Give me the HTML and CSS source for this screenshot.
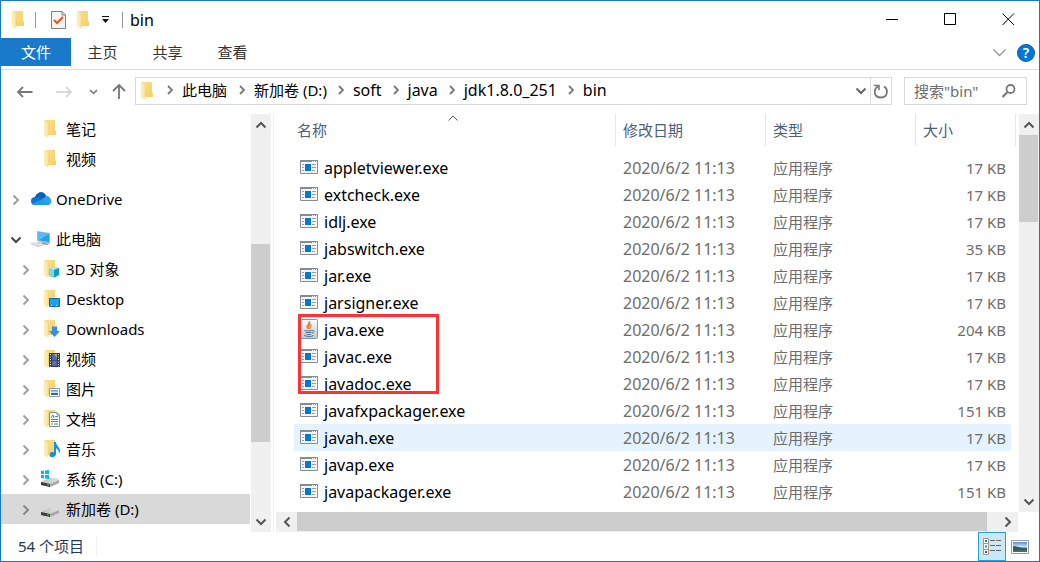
FILE: index.html
```html
<!DOCTYPE html>
<html lang="zh-CN">
<head>
<meta charset="utf-8">
<title>bin</title>
<link rel="stylesheet" href="styles.css">
</head>
<body>
<svg class="defs" aria-hidden="true">
  <defs>
    <linearGradient id="gold" x1="0" x2="1" y1="0" y2="1"><stop offset="0" stop-color="#fbdf8a"/><stop offset="1" stop-color="#f5cf6b"/></linearGradient>
    <linearGradient id="drv" x1="0" x2="1"><stop offset="0" stop-color="#bdbdbd"/><stop offset="1" stop-color="#e2e2e2"/></linearGradient>
    <linearGradient id="sky" x1="0" x2="0" y1="0" y2="1"><stop offset="0" stop-color="#4a8fdc"/><stop offset=".5" stop-color="#d4ecfa"/><stop offset=".6" stop-color="#3c6f62"/><stop offset="1" stop-color="#2f69a8"/></linearGradient>
    <linearGradient id="tile" x1="0" x2="0" y1="0" y2="1"><stop offset="0" stop-color="#fafcfd"/><stop offset="1" stop-color="#bccbd6"/></linearGradient>
    <g id="fold"><path d="M1 0H11V10L12 11V15H1Z" fill="url(#gold)"/><path d="M0 0L4 3V17.500L0 15.500Z" fill="#feebb0"/><path d="M4 3V17" stroke="#f3cf74" stroke-width=".6"/></g>
  </defs>
  <symbol id="folder" viewBox="0 0 18 18"><use href="#fold"/></symbol>
  <symbol id="cube" viewBox="0 0 18 18"><use href="#fold"/><path d="M5 9L10 7L15 8V15L10 17.500L5 16Z" fill="#3fc3d8"/><path d="M5 9L10 7L15 8L10 10Z" fill="#b4edf4"/><path d="M10 10L15 8V15L10 17.500Z" fill="#0f9cb6"/><path d="M5 9L10 10V17.500L5 16Z" fill="#74dce8"/></symbol>
  <symbol id="desktop" viewBox="0 0 18 18"><use href="#fold"/><path d="M5.500 8.500H15.500V16.500H5.500Z" fill="#1ba1f4" stroke="#0969b0"/><path d="M7 15.500H14" stroke="#d5eefe" stroke-dasharray="1 4"/></symbol>
  <symbol id="download" viewBox="0 0 18 18"><use href="#fold"/><path d="M8 6.500H13V11H16L10.500 17L5 11H8Z" fill="#3690e0"/></symbol>
  <symbol id="video" viewBox="0 0 18 18"><use href="#fold"/><path d="M5 3H16V17H5Z" fill="#3d3d3d"/><path d="M6.500 4V17M14.500 4V17" stroke="#eee" stroke-dasharray="1 1.500"/><path d="M8 4H13V9.500H8Z" fill="#d7a33f"/><path d="M8 4H10L13 8V9.500H8Z" fill="#3974bd"/><path d="M8 10.500H13V16H8Z" fill="#4068bd"/><path d="M9 12H12V14H9Z" fill="#d34c45"/></symbol>
  <symbol id="picture" viewBox="0 0 18 18"><use href="#fold"/><path d="M5.500 8.500H15.500V16.500H5.500Z" fill="#fff" stroke="#9a9a9a"/><path d="M7 10H14V15H7Z" fill="url(#sky)"/></symbol>
  <symbol id="document" viewBox="0 0 18 18"><use href="#fold"/><path d="M5.500 2.500H13L15.500 5V16.500H5.500Z" fill="#fff" stroke="#8c8c8c"/><path d="M13 2.500V5H15.500" fill="none" stroke="#8c8c8c"/><path d="M7 8L9 5L10 8M11 6.500H14M7 9.500H14M7 11.500H14M7 14H9M10 14H14" fill="none" stroke="#328dc2"/></symbol>
  <symbol id="music" viewBox="0 0 18 18"><use href="#fold"/><path d="M10 2H12C12 6 16 7 16 11L15 14C15 10 13 8.500 12 8.500V14.500C11 18 5.500 18 5.500 15C5.500 12.500 8 11.500 10 12.500Z" fill="#0d92e4"/></symbol>
  <symbol id="drive" viewBox="0 0 18 18"><path d="M0 12L8 8H16L18 10V13L9 17L0 15Z" fill="url(#drv)"/><path d="M0 12L9 14V17L0 15Z" fill="#3b3b3b"/><path d="M9 14L18 10V13L9 17Z" fill="#a9a9a9"/><path d="M6 15H8" stroke="#51cf51"/></symbol>
  <symbol id="windrive" viewBox="0 0 18 18"><use href="#drive"/><path d="M0 1L3 .5V4H0ZM4 .5L8 0V4H4ZM0 5H3V8.500L0 8ZM4 5H8V9L4 8.500Z" fill="#00bcf2"/></symbol>
  <symbol id="cloud" viewBox="0 0 20 14"><path d="M4 5C7-1 13-1 15 4C18 4 20 7 20 9C20 12 18 13 16 13H4C1 13 0 11 0 9C0 6 2 5 4 5Z" fill="#0a76d1"/><path d="M4 5C7-1 13-1 15 4L11 7L7 5Z" fill="#0763b5"/><path d="M12 7L15 4C18 4 20 7 20 9C20 12 18 13 16 13H4L1 12Z" fill="#28a4ea"/><path d="M7 5L18 12L16 13H4L1 12L12 7Z" fill="#1a90df" opacity=".5"/></symbol>
  <symbol id="pc" viewBox="0 0 20 18"><path d="M6 1L19 3V14L6 11Z" fill="#a9b7c2"/><path d="M7 2L18 4V12L7 10Z" fill="#23a0f5"/><path d="M7 2L18 4L8 10H7Z" fill="#56bdf9"/><path d="M11 12L18 14L16 15L11 14Z" fill="#8998a3"/><path d="M0 13L9 12L14 15L7 17L0 14Z" fill="#c3c9ce"/><path d="M2 13.500L10 15.500M4 13L12 15" stroke="#fff" stroke-width=".6"/></symbol>
  <symbol id="exe" viewBox="0 0 18 14"><path d="M.5.5H17.500V13.500H.5Z" fill="#f4f5f6" stroke="#868c91"/><path d="M0 0H18V2H0Z" fill="#868c91"/><path d="M12 1.500H13M14 1.500H15M16 1.500H17" stroke="#fff"/><path d="M5 4H11V11H5Z" fill="#0078d7"/><path d="M2 4.500H4M2 7.500H4M2 10.500H4M12 4.500H16M12 7.500H16M12 10.500H15" stroke="#9b9fa3"/></symbol>
  <symbol id="java" viewBox="0 0 18 20"><rect x=".5" y=".5" width="17" height="19" rx="1" fill="url(#tile)" stroke="#8799a5"/><path d="M8.500 10C4 7 10.500 6 9 2.500C12 5.500 6.500 6.500 8.500 10M9.500 10C12 8 8.500 7.500 11.500 5.500" fill="none" stroke="#ee7332" stroke-width="1.200"/><path d="M4.500 11.500C6 12 10.500 12 12 11.500M5.500 13.500H11.500M6.500 15.500H11M12 11.500C15 11 14.500 13.500 12 14M4 16C6 18 11 18 13.500 16.500" fill="none" stroke="#4f7290"/></symbol>
  <symbol id="right" viewBox="0 0 8 12"><path d="M1.500 1.500L6 6L1.500 10.500" fill="none" stroke="currentColor" stroke-width="2"/></symbol>
  <symbol id="crumb" viewBox="0 0 6 10"><path d="M1 1L5 5L1 9" fill="none" stroke="currentColor" stroke-width="1.800"/></symbol>
  <symbol id="down" viewBox="0 0 12 8"><path d="M1.500 1.500L6 6L10.500 1.500" fill="none" stroke="currentColor" stroke-width="2"/></symbol>
  <symbol id="up" viewBox="0 0 12 8"><path d="M1.500 6.500L6 2L10.500 6.500" fill="none" stroke="currentColor" stroke-width="2"/></symbol>
  <symbol id="left" viewBox="0 0 8 12"><path d="M6.500 1.500L2 6L6.500 10.500" fill="none" stroke="currentColor" stroke-width="2"/></symbol>
</svg>

<div class="window">
  <header class="titlebar">
    <svg class="i18"><use href="#folder"/></svg>
    <span class="rule"></span>
    <button class="quick props" aria-label="属性"><svg width="15" height="18" viewBox="0 0 15 18"><path d="M.5.5H11L14.500 4V17.500H.5Z" fill="#f4f4f4" stroke="#808080"/><path d="M11 .5V4H14.500" fill="none" stroke="#808080"/><path d="M3 9L6 12L12 6" fill="none" stroke="#ea5416" stroke-width="2"/></svg></button>
    <button class="quick" aria-label="新建文件夹"><svg class="i18"><use href="#folder"/></svg></button>
    <button class="quick more" aria-label="自定义快速访问工具栏"><svg width="7" height="8" viewBox="0 0 7 8"><path d="M0 .5H7" stroke="#111"/><path d="M0 3H7L3.500 7Z" fill="#111"/></svg></button>
    <span class="rule"></span>
    <h1>bin</h1>
    <div class="controls">
      <button aria-label="最小化"><svg width="13" height="13"><path d="M0 6.500H12" stroke="#000"/></svg></button>
      <button aria-label="最大化"><svg width="13" height="13"><path d="M.5 .5H11.500V11.500H.5Z" fill="none" stroke="#000"/></svg></button>
      <button aria-label="关闭"><svg width="13" height="13"><path d="M.5.5L12 12M12 .5L.5 12" stroke="#000"/></svg></button>
    </div>
  </header>

  <nav class="ribbon">
    <button class="tab file">文件</button>
    <button class="tab">主页</button>
    <button class="tab">共享</button>
    <button class="tab">查看</button>
    <div class="ribbon-end">
      <button aria-label="展开功能区"><svg width="13" height="8" viewBox="0 0 13 8"><path d="M.5.5L6.500 6.500L12.500.5" fill="none" stroke="#999" stroke-width="1.300"/></svg></button>
      <button class="help" aria-label="帮助">?</button>
    </div>
  </nav>

  <div class="addressbar">
    <div class="history">
      <button aria-label="后退"><svg width="16" height="12" viewBox="0 0 16 12"><path d="M1 6H15.500M6 1L1 6L6 11" fill="none" stroke="#777" stroke-width="1.800"/></svg></button>
      <button aria-label="前进"><svg width="16" height="12" viewBox="0 0 16 12"><path d="M0 6H15M10 1L15 6L10 11" fill="none" stroke="#d8d8d8" stroke-width="1.800"/></svg></button>
      <button class="recent" aria-label="最近位置"><svg width="9" height="6" viewBox="0 0 12 8"><use href="#down"/></svg></button>
      <button aria-label="上移"><svg width="14" height="15" viewBox="0 0 14 15"><path d="M7 1V15M1 7L7 1L13 7" fill="none" stroke="#777" stroke-width="1.800"/></svg></button>
    </div>
    <div class="path">
      <svg class="i18"><use href="#folder"/></svg>
      <ol>
        <li><svg class="crumb"><use href="#crumb"/></svg><a href="#">此电脑</a></li>
        <li><svg class="crumb"><use href="#crumb"/></svg><a href="#">新加卷 (D:)</a></li>
        <li class="latin"><svg class="crumb"><use href="#crumb"/></svg><a href="#">soft</a></li>
        <li class="latin"><svg class="crumb"><use href="#crumb"/></svg><a href="#">java</a></li>
        <li class="latin"><svg class="crumb"><use href="#crumb"/></svg><a href="#">jdk1.8.0_251</a></li>
        <li class="latin"><svg class="crumb"><use href="#crumb"/></svg><a href="#">bin</a></li>
      </ol>
      <button class="drop" aria-label="以前的位置"><svg width="12" height="8"><use href="#down"/></svg></button>
      <button class="refresh" aria-label="刷新"><svg width="14" height="15" viewBox="0 0 14 15"><path d="M4 2.500C-1 5-.5 13.500 7 13.500C14 13.500 14.500 5 10 2.500" fill="none" stroke="#777" stroke-width="1.800"/><path d="M0 1.500H5V6" fill="none" stroke="#777" stroke-width="1.600"/></svg></button>
    </div>
    <div class="search">
      <input type="text" aria-label="搜索" placeholder='搜索"bin"'>
      <svg width="14" height="14" viewBox="0 0 14 14"><circle cx="8.500" cy="5" r="4" fill="none" stroke="#777" stroke-width="1.800"/><path d="M5.500 8L.5 13" stroke="#777" stroke-width="2.200"/></svg>
    </div>
  </div>

  <main>
    <aside>
      <ul class="tree">
        <li class="sub"><svg class="i18"><use href="#folder"/></svg><span>笔记</span></li>
        <li class="sub"><svg class="i18"><use href="#folder"/></svg><span>视频</span></li>
        <li class="root"><button aria-label="展开 OneDrive"><svg class="ar"><use href="#right"/></svg></button><svg class="i20 flat"><use href="#cloud"/></svg><span>OneDrive</span></li>
        <li class="root"><button class="open" aria-label="折叠 此电脑"><svg width="12" height="8"><use href="#down"/></svg></button><svg class="i20"><use href="#pc"/></svg><span>此电脑</span></li>
        <li><button aria-label="展开 3D 对象"><svg class="ar"><use href="#right"/></svg></button><svg class="i18"><use href="#cube"/></svg><span>3D 对象</span></li>
        <li><button aria-label="展开 Desktop"><svg class="ar"><use href="#right"/></svg></button><svg class="i18"><use href="#desktop"/></svg><span>Desktop</span></li>
        <li><button aria-label="展开 Downloads"><svg class="ar"><use href="#right"/></svg></button><svg class="i18"><use href="#download"/></svg><span>Downloads</span></li>
        <li><button aria-label="展开 视频"><svg class="ar"><use href="#right"/></svg></button><svg class="i18"><use href="#video"/></svg><span>视频</span></li>
        <li><button aria-label="展开 图片"><svg class="ar"><use href="#right"/></svg></button><svg class="i18"><use href="#picture"/></svg><span>图片</span></li>
        <li><button aria-label="展开 文档"><svg class="ar"><use href="#right"/></svg></button><svg class="i18"><use href="#document"/></svg><span>文档</span></li>
        <li><button aria-label="展开 音乐"><svg class="ar"><use href="#right"/></svg></button><svg class="i18"><use href="#music"/></svg><span>音乐</span></li>
        <li class="disk"><button aria-label="展开 系统 (C:)"><svg class="ar"><use href="#right"/></svg></button><svg class="i18"><use href="#windrive"/></svg><span>系统 (C:)</span></li>
        <li class="disk selected"><button aria-label="展开 新加卷 (D:)"><svg class="ar"><use href="#right"/></svg></button><svg class="i18"><use href="#drive"/></svg><span>新加卷 (D:)</span></li>
      </ul>
      <div class="vbar side-bar">
        <button aria-label="向上滚动"><svg width="12" height="8"><use href="#up"/></svg></button>
        <div class="track"><div class="thumb"></div></div>
        <button aria-label="向下滚动"><svg width="12" height="8"><use href="#down"/></svg></button>
      </div>
    </aside>

    <section class="files">
      <div class="upper">
        <div class="listing">
          <table>
            <colgroup><col><col class="c-date"><col class="c-type"><col class="c-size"></colgroup>
            <thead><tr><th class="sorted">名称<svg class="sort" width="10" height="6" viewBox="0 0 10 6"><path d="M.5 5.500L5 1L9.500 5.500" fill="none" stroke="#555"/></svg></th><th>修改日期</th><th>类型</th><th>大小</th></tr></thead>
            <tbody>
              <tr><td><svg class="exe"><use href="#exe"/></svg>appletviewer.exe</td><td>2020/6/2 11:13</td><td>应用程序</td><td>17 KB</td></tr>
              <tr><td><svg class="exe"><use href="#exe"/></svg>extcheck.exe</td><td>2020/6/2 11:13</td><td>应用程序</td><td>17 KB</td></tr>
              <tr><td><svg class="exe"><use href="#exe"/></svg>idlj.exe</td><td>2020/6/2 11:13</td><td>应用程序</td><td>17 KB</td></tr>
              <tr><td><svg class="exe"><use href="#exe"/></svg>jabswitch.exe</td><td>2020/6/2 11:13</td><td>应用程序</td><td>35 KB</td></tr>
              <tr><td><svg class="exe"><use href="#exe"/></svg>jar.exe</td><td>2020/6/2 11:13</td><td>应用程序</td><td>17 KB</td></tr>
              <tr><td><svg class="exe"><use href="#exe"/></svg>jarsigner.exe</td><td>2020/6/2 11:13</td><td>应用程序</td><td>17 KB</td></tr>
              <tr><td><svg class="exe java"><use href="#java"/></svg>java.exe</td><td>2020/6/2 11:13</td><td>应用程序</td><td>204 KB</td></tr>
              <tr><td><svg class="exe"><use href="#exe"/></svg>javac.exe</td><td>2020/6/2 11:13</td><td>应用程序</td><td>17 KB</td></tr>
              <tr><td><svg class="exe"><use href="#exe"/></svg>javadoc.exe</td><td>2020/6/2 11:13</td><td>应用程序</td><td>17 KB</td></tr>
              <tr><td><svg class="exe"><use href="#exe"/></svg>javafxpackager.exe</td><td>2020/6/2 11:13</td><td>应用程序</td><td>151 KB</td></tr>
              <tr class="hover"><td><svg class="exe"><use href="#exe"/></svg>javah.exe</td><td>2020/6/2 11:13</td><td>应用程序</td><td>17 KB</td></tr>
              <tr><td><svg class="exe"><use href="#exe"/></svg>javap.exe</td><td>2020/6/2 11:13</td><td>应用程序</td><td>17 KB</td></tr>
              <tr><td><svg class="exe"><use href="#exe"/></svg>javapackager.exe</td><td>2020/6/2 11:13</td><td>应用程序</td><td>151 KB</td></tr>
            </tbody>
          </table>
          <div class="mark"></div>
        </div>
        <div class="vbar list-bar">
          <button aria-label="向上滚动"><svg width="12" height="8"><use href="#up"/></svg></button>
          <div class="track"><div class="thumb"></div></div>
          <button aria-label="向下滚动"><svg width="12" height="8"><use href="#down"/></svg></button>
        </div>
      </div>
      <div class="hbar">
        <button aria-label="向左滚动"><svg width="8" height="12"><use href="#left"/></svg></button>
        <div class="track"><div class="thumb"></div></div>
        <button aria-label="向右滚动"><svg width="8" height="12"><use href="#right"/></svg></button>
      </div>
    </section>
  </main>

  <footer>
    <span class="count">54 个项目</span>
    <div class="views">
      <button class="active" aria-label="详细信息"><svg width="18" height="17" viewBox="0 0 18 17"><path d="M.5.500H5.500V16.500H.5ZM.5 5.500H5.500M.5 11.500H5.500" fill="#fff" stroke="#999"/><path d="M2 3H4" stroke="#36789e" stroke-width="2"/><path d="M2 8.500H4" stroke="#5b8d6b" stroke-width="2"/><path d="M2 14H4" stroke="#c43b28" stroke-width="2"/><path d="M7 2.500H12M13 2.500H18M7 7.500H12M13 7.500H18M7 12.500H12M13 12.500H18" stroke="#666"/></svg></button>
      <button aria-label="大图标"><svg width="18" height="14" viewBox="0 0 18 14"><path d="M.5.5H17.500V13.500H.5Z" fill="#fff" stroke="#999"/><path d="M2 2H16V12H2Z" fill="url(#sky)"/><path d="M2 6C7 6 10 9 16 9V10H2Z" fill="#315f4d"/></svg></button>
    </div>
  </footer>
</div>
</body>
</html>
```

FILE: styles.css
```css
* { box-sizing: border-box; }
body {
  margin: 0;
  font: 15px/20px "Noto Sans", "Noto Sans CJK SC", sans-serif;
  color: #000;
  background: #fff;
}
button { font: inherit; color: inherit; border: 0; padding: 0; background: none; display: flex; align-items: center; justify-content: center; }
svg { display: block; flex: none; }
ul, ol { list-style: none; margin: 0; padding: 0; }
.defs { position: absolute; width: 0; height: 0; }
.i18 { width: 18px; height: 18px; }
.i20 { width: 20px; height: 18px; }
.i20.flat { height: 14px; }

.window { min-height: 100vh; display: flex; flex-direction: column; border: 1px solid #1979ca; }

.titlebar { display: flex; align-items: center; height: 37px; padding-left: 11px; }
.rule { width: 1px; height: 16px; background: #999; }
.titlebar > .i18 { margin-right: 5px; }
.props { margin: 0 11px 0 15px; }
.more { margin: 0 13px 0 7px; }
.titlebar h1 { margin: 0 0 0 7px; font-size: 16px; font-weight: 400; }
.controls { display: flex; margin-left: auto; padding-right: 2px; }
.controls button { width: 58px; height: 36px; }

.ribbon { display: flex; height: 32px; border-bottom: 1px solid #dadbdc; padding-bottom: 3px; color: #333; }
.tab { width: 65px; padding-right: 2px; }
.tab.file { width: 70px; padding-right: 0; background: #1979ca; color: #fff; }
.ribbon-end { display: flex; align-items: center; gap: 11px; margin-left: auto; padding: 2px 4px 0 0; }
.help { width: 18px; height: 18px; border-radius: 50%; background: #0078d7; border: 1px solid #0b5ca5; color: #fff; font-size: 14px; font-weight: 600; }

.addressbar { display: flex; align-items: center; height: 44px; padding: 0 12px 2px 16px; }
.history { display: flex; align-items: center; width: 118px; padding-top: 1px; color: #777; }
.history button + button { margin-left: 23px; }
.history .recent + button { margin-left: 14px; }
.history button.recent { margin-left: 17px; }
.path { display: flex; flex: 1; align-items: center; height: 28px; border: 1px solid #d9d9d9; padding-left: 5px; }
.path ol { display: flex; flex: 1; padding-bottom: 2px; }
.path li { display: flex; align-items: center; }
.path li.latin { font-size: 16px; }
.path li a { color: #000; text-decoration: none; }
.crumb { width: 6px; height: 10px; margin: 0 9px 0 12px; color: #777; }
.path li:first-child .crumb { margin-left: 8px; }
.path li.latin .crumb { margin-left: 11px; }
.drop { width: 19px; color: #666; }
.refresh { width: 21px; height: 26px; border-left: 1px solid #d9d9d9; }
.search { display: flex; align-items: center; width: 123px; height: 28px; margin-left: 12px; padding: 0 10px 0 9px; border: 1px solid #d9d9d9; }
.search input { flex: 1; min-width: 0; border: 0; padding: 0; font: inherit; outline: 0; }
.search input::placeholder { color: #6d6d6d; opacity: 1; }

main { display: flex; flex: 1; }
aside { display: flex; width: 273px; border-right: 1px solid #f0f0f0; }
.tree { flex: 1; }
.tree li { display: flex; align-items: center; height: 30px; padding-left: 19px; margin-right: 1px; }
.tree li.sub { padding-left: 43px; }
.tree li.root { padding-left: 9px; margin-top: 10px; }
.tree button { width: 12px; height: 20px; margin-right: 12px; padding-top: 2px; color: #a0a0a0; }
.tree .root button { margin-right: 9px; }
.tree .root .open { color: #444; }
.tree span { margin-left: 4px; }
.tree .root span { margin-left: 5px; }
.tree .disk button { margin-right: 9px; }
.tree .disk span { margin-left: 7px; }
.tree .selected button { color: #888; }
.tree .selected { background: #d9d9d9; }
.ar { width: 8px; height: 12px; }

.vbar { display: flex; flex-direction: column; width: 20px; background: #f0f0f0; color: #555; }
.side-bar { margin-right: 2px; }
.vbar button { width: 19px; height: 21px; }
.track { flex: 1; }
.thumb { background: #cdcdcd; }
.vbar .track { padding-right: 1px; }
.side-bar .thumb { margin-top: 109px; height: 198px; }
.list-bar .thumb { height: 87px; }

.files { flex: 1; min-width: 0; display: flex; flex-direction: column; }
.upper { display: flex; flex: 1; }
.listing { flex: 1; position: relative; padding: 0 2px 0 20px; margin-bottom: 1px; }
.list-bar { margin-left: 1px; }
table { width: 100%; table-layout: fixed; border-spacing: 0; }
.c-date, .c-type { width: 150px; }
.c-size { width: 100px; }
th { height: 32px; padding: 0 0 0 7px; border-right: 1px solid #e5e5e5; text-align: left; font-weight: 400; color: #4c607a; }
th.sorted { position: relative; padding-left: 3px; }
.sort { position: absolute; top: 1px; left: calc(50% - 7px); }
thead::after { content: ""; display: block; height: 8px; }
td { height: 27px; padding: 0 0 0 7px; color: #6d6d6d; white-space: nowrap; }
td:first-child { display: flex; align-items: center; gap: 6px; padding-left: 6px; color: #000; font-size: 16px; }
td:nth-child(2) { font-size: 16px; }
td:last-child { padding-right: 5px; text-align: right; border-right: 5px solid #fff; }
.hover td { background: #e5f3ff; }
.exe { width: 18px; height: 14px; margin-bottom: 2px; }
.exe.java { height: 20px; }
.mark { position: absolute; left: 24px; top: 200px; width: 141px; height: 80px; border: 3px solid #f83534; }

.hbar { display: flex; height: 20px; margin: 0 21px 0 2px; background: #f0f0f0; color: #555; }
.hbar button { width: 21px; height: 19px; }
.hbar .track { padding: 0 10px 1px 0; }
.hbar .thumb { height: 19px; }

footer { display: flex; align-items: center; height: 29px; padding: 0 5px 0 17px; color: #1e395b; }
.count { padding-right: 12px; border-right: 1px solid #f0f0f0; margin-bottom: 2px; }
.views { display: flex; margin-left: auto; }
.views button { width: 28px; height: 29px; }
.views .active { background: #cce8f6; border: 1px solid #26a0da; }
```
